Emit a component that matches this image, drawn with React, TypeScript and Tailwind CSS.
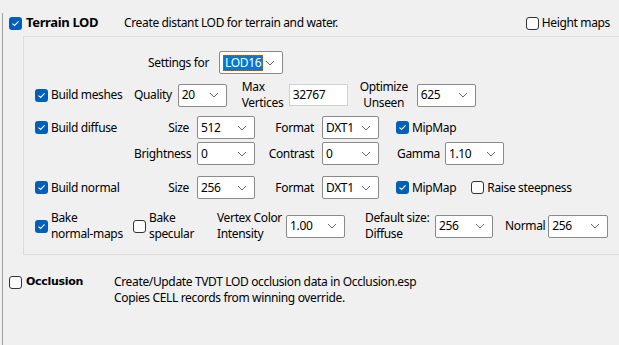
import React from "react";

const font = { fontFamily: '"Noto Sans", "Open Sans", sans-serif', letterSpacing: "-0.35px" };

function Check({ on }: { on?: boolean }) {
  if (on) {
    return (
      <span className="flex h-[13px] w-[13px] shrink-0 items-center justify-center rounded-[3px] bg-[#005fb8]">
        <svg width="9" height="7" viewBox="0 0 9 7" fill="none">
          <path d="M1.5 3.6 L3.6 5.5 L7.6 1.4" stroke="#fff" strokeWidth="1.1" />
        </svg>
      </span>
    );
  }
  return <span className="h-[13px] w-[13px] shrink-0 rounded-[3px] border border-[#333] bg-[#fbfbfb]" />;
}

function Chevron() {
  return (
    <svg width="10" height="6" viewBox="0 0 10 6" fill="none" className="shrink-0">
      <path d="M1 1 L5 5 L9 1" stroke="#6b6b6b" strokeWidth="1" />
    </svg>
  );
}

function Select({ value, w, focus }: { value: string; w: string; focus?: boolean }) {
  return (
    <div className={`flex h-[23px] ${w} shrink-0 items-center justify-between rounded-[2px] border border-[#8a8a8a] bg-white pl-[3px] pr-[7px]`}>
      {focus ? (
        <span className="border border-dotted border-[#c06000] bg-[#0078d7] px-[1px] leading-[14px] text-white">{value}</span>
      ) : (
        <span className="leading-[14px]">{value}</span>
      )}
      <Chevron />
    </div>
  );
}

function CheckLabel({ on, children, className = "" }: { on?: boolean; children: React.ReactNode; className?: string }) {
  return (
    <div className={`flex items-center gap-[3px] ${className}`}>
      <Check on={on} />
      <span className="whitespace-nowrap leading-[16px]">{children}</span>
    </div>
  );
}

export default function App() {
  return (
    <div className="h-[345px] w-[619px] overflow-hidden bg-[#f0f0f0] pl-[2px] text-[12px] text-black" style={font}>
      <div className="h-full border-l border-[#a0a0a0]">
        {/* header */}
        <div className="mt-[13px] flex h-[20px] items-center">
          <div className="ml-[6px] flex w-[115px] items-center gap-[4px]">
            <Check on />
            <span className="text-[13px] font-bold">Terrain LOD</span>
          </div>
          <span className="whitespace-nowrap">Create distant LOD for terrain and water.</span>
          <CheckLabel className="ml-auto mr-[9px]">Height maps</CheckLabel>
        </div>

        {/* terrain panel */}
        <div className="ml-[20px] mt-[3px] h-[219px] border-y border-l border-[#dcdcdc]">
          <div className="mt-[14px] flex h-[23px] items-center">
            <span className="w-[185px] text-right">Settings for</span>
            <div className="ml-[10px]">
              <Select value="LOD16" w="w-[64px]" focus />
            </div>
          </div>

          <div className="mt-[5px] flex h-[32px] items-center">
            <CheckLabel on className="ml-[11px] w-[99px]">Build meshes</CheckLabel>
            <span>Quality</span>
            <div className="ml-[6px]"><Select value="20" w="w-[49px]" /></div>
            <span className="ml-[15px] w-[40px] whitespace-nowrap leading-[16px]">Max<br />Vertices</span>
            <div className="ml-[7px] flex h-[22px] w-[59px] items-center border border-[#d0d0d0] bg-white pl-[3px]">32767</div>
            <span className="ml-[12px] w-[48px] whitespace-nowrap text-center leading-[16px]">Optimize<br />Unseen</span>
            <div className="ml-[9px]"><Select value="625" w="w-[59px]" /></div>
          </div>

          <div className="mt-[5px] flex h-[23px] items-center">
            <CheckLabel on className="ml-[11px] w-[99px]">Build diffuse</CheckLabel>
            <span className="w-[55px] text-right">Size</span>
            <div className="ml-[8px]"><Select value="512" w="w-[58px]" /></div>
            <span className="w-[59px] text-right">Format</span>
            <div className="ml-[8px]"><Select value="DXT1" w="w-[57px]" /></div>
            <CheckLabel on className="ml-[17px]">MipMap</CheckLabel>
          </div>

          <div className="mt-[3px] flex h-[23px] items-center">
            <span className="ml-[110px] w-[55px] text-right">Brightness</span>
            <div className="ml-[8px]"><Select value="0" w="w-[58px]" /></div>
            <span className="w-[59px] text-right">Contrast</span>
            <div className="ml-[8px]"><Select value="0" w="w-[57px]" /></div>
            <span className="ml-[18px]">Gamma</span>
            <div className="ml-[5px]"><Select value="1.10" w="w-[59px]" /></div>
          </div>

          <div className="mt-[11px] flex h-[23px] items-center">
            <CheckLabel on className="ml-[11px] w-[99px]">Build normal</CheckLabel>
            <span className="w-[55px] text-right">Size</span>
            <div className="ml-[8px]"><Select value="256" w="w-[58px]" /></div>
            <span className="w-[59px] text-right">Format</span>
            <div className="ml-[8px]"><Select value="DXT1" w="w-[57px]" /></div>
            <CheckLabel on className="ml-[17px]">MipMap</CheckLabel>
            <CheckLabel className="ml-[15px]">Raise steepness</CheckLabel>
          </div>

          <div className="mt-[9px] flex h-[36px] items-center">
            <CheckLabel on className="ml-[11px] w-[98px]">Bake<br />normal-maps</CheckLabel>
            <CheckLabel className="w-[84px]">Bake<br />specular</CheckLabel>
            <span className="w-[64px] whitespace-nowrap leading-[16px]">Vertex Color<br />Intensity</span>
            <div className="ml-[5px]"><Select value="1.00" w="w-[59px]" /></div>
            <span className="ml-[20px] w-[64px] whitespace-nowrap leading-[16px]">Default size:<br />Diffuse</span>
            <div className="ml-[6px]"><Select value="256" w="w-[58px]" /></div>
            <span className="ml-[12px]">Normal</span>
            <div className="ml-[3px]"><Select value="256" w="w-[60px]" /></div>
          </div>
        </div>

        {/* occlusion */}
        <div className="mt-[19px] flex items-start">
          <div className="ml-[6px] flex h-[16px] w-[105px] items-center gap-[4px]">
            <Check />
            <span className="text-[11px] font-bold" style={{ fontFamily: '"DejaVu Sans", sans-serif', letterSpacing: "-0.3px" }}>Occlusion</span>
          </div>
          <div className="leading-[16px]">
            <div>Create/Update TVDT LOD occlusion data in Occlusion.esp</div>
            <div>Copies CELL records from winning override.</div>
          </div>
        </div>
      </div>
    </div>
  );
}
